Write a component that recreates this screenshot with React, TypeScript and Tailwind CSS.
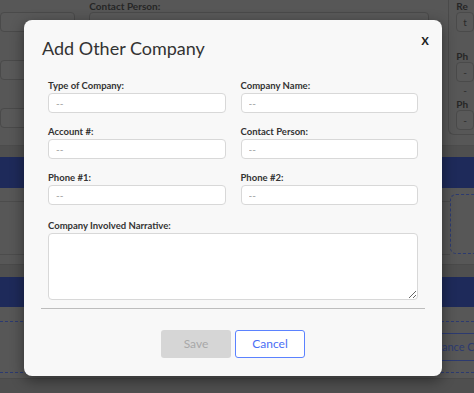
const font = { fontFamily: "Lato, 'Open Sans', sans-serif" };

function Field({ label }: { label: string }) {
  return (
    <div className="flex flex-col">
      <label className="text-[9.5px] leading-[12px] font-bold text-[#333] mb-[1px]">{label}</label>
      <input
        placeholder="--"
        className="h-[20px] w-full rounded-[4px] border border-[#d8d8d8] bg-white px-[7px] text-[10px] text-[#333] placeholder:text-[#999] outline-none"
      />
    </div>
  );
}

function BgInput({ children }: { children?: React.ReactNode }) {
  return (
    <div className="h-[20px] rounded-[4px] border border-[#4a4a4a] bg-[#595959] px-[6px] text-[10px] leading-[18px] text-[#2a2a2a]">
      {children}
    </div>
  );
}

function Background() {
  return (
    <div className="flex flex-col w-full h-full text-[#262626]">
      <div className="flex h-[135px]">
        <div className="w-[76px] flex flex-col gap-[28px] pt-[12px]">
          <BgInput />
          <BgInput />
          <BgInput />
        </div>
        <div className="ml-[14px] w-[343px] flex flex-col">
          <div className="text-[10px] font-bold leading-[12px]">Contact Person:</div>
          <BgInput />
        </div>
        <div className="ml-[19px] flex-1 border-l border-b border-[#4a4a4a] rounded-bl-[6px] pl-[7px] flex flex-col">
          <div className="text-[10px] font-bold leading-[12px]">Re</div>
          <BgInput>t</BgInput>
          <div className="text-[10px] font-bold leading-[12px] mt-[18px]">Ph</div>
          <BgInput>--</BgInput>
          <div className="text-[10px] font-bold leading-[12px] mt-[16px]">Ph</div>
          <BgInput>--</BgInput>
        </div>
      </div>
      <div className="h-[11px] bg-[#575757] border-b border-[#4c4c4c]" />
      <div className="h-[11px] bg-[#4f4f4f]" />
      <div className="h-[31px] bg-[#1e2a5a]" />
      <div className="h-[76px] flex">
        <div className="flex-1 flex flex-col">
          <div className="mt-[13px] border-t border-[#4c4c4c]" />
          <div className="mt-[52px] border-t border-[#4c4c4c]" />
        </div>
        <div className="w-[24px] h-[60px] mt-[6px] border border-dashed border-[#2c3a70] rounded-l-[6px] border-r-0" />
      </div>
      <div className="h-[13px] bg-[#4f4f4f] border-t border-[#4a4a4a]" />
      <div className="h-[30px] bg-[#1e2a5a]" />
      <div className="mt-[14px] border-t border-dashed border-[#2c3a70]" />
      <div className="flex justify-end mt-[11px]">
        <div className="w-[36px] h-[28px] border-y border-[#2c3a70] text-[11px] leading-[26px] text-[#2c3a70] whitespace-nowrap overflow-hidden">
          rance C
        </div>
      </div>
      <div className="mt-[11px] border-t border-dashed border-[#2c3a70]" />
      <div className="mt-[5px] flex-1 bg-[#4f4f4f] border-t border-[#4a4a4a]" />
    </div>
  );
}

export default function App() {
  return (
    <div style={font} className="relative w-[474px] h-[393px] overflow-hidden bg-[#575757]">
      <Background />
      <div className="absolute left-[24px] top-[20px] w-[418px] h-[356px] rounded-[8px] bg-[#f8f8f8] shadow-[0_4px_14px_rgba(0,0,0,0.45)] flex flex-col">
        <div className="flex items-start justify-between pl-[18px] pr-[13px] pt-[17px]">
          <h2 className="text-[18px] leading-[22px] text-[#333]">Add Other Company</h2>
          <button className="text-[15px] font-semibold leading-[14px] text-[#222] mt-[-5px]">x</button>
        </div>
        <div className="px-[24px] pt-[21px] grid grid-cols-2 gap-x-[15px] gap-y-[13px]">
          <Field label="Type of Company:" />
          <Field label="Company Name:" />
          <Field label="Account #:" />
          <Field label="Contact Person:" />
          <Field label="Phone #1:" />
          <Field label="Phone #2:" />
          <div className="col-span-2 flex flex-col mt-[2px]">
            <label className="text-[9.5px] leading-[12px] font-bold text-[#333] mb-[1px]">
              Company Involved Narrative:
            </label>
            <textarea className="h-[67px] w-full rounded-[4px] border border-[#d8d8d8] bg-white outline-none" />
          </div>
        </div>
        <div className="mx-[17px] mt-[8px] border-t border-[#bdbdbd]" />
        <div className="flex justify-center gap-[4px] mt-[21px]">
          <button disabled className="w-[70px] h-[28px] rounded-[3px] bg-[#d6d6d6] text-[12px] text-[#a8a8a8]">
            Save
          </button>
          <button className="w-[70px] h-[28px] rounded-[3px] border border-[#5b82ff] bg-white text-[12px] text-[#4a6ef5]">
            Cancel
          </button>
        </div>
      </div>
    </div>
  );
}
